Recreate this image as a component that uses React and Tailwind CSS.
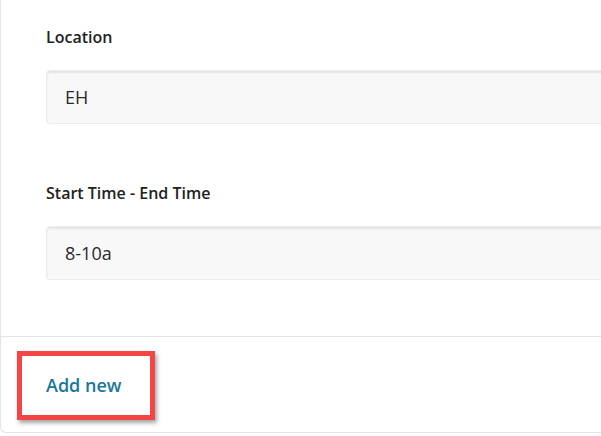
import React from 'react';

const Field = ({ label, value, className = '' }) => (
  <div className={className}>
    <label className="block text-[16px] leading-[22px] font-semibold text-[#222]">{label}</label>
    <div className="mt-[22px] h-[54px] rounded-l-[4px] border border-[#ececec] bg-[#f8f8f8] shadow-[inset_0_2px_2px_rgba(0,0,0,0.08)] flex items-center pl-[18px]">
      <span className="text-[18px] text-[#2a2a2a]">{value}</span>
    </div>
  </div>
);

export default function App() {
  return (
    <div className="w-[601px] h-[436px] overflow-hidden bg-white font-['Open_Sans',sans-serif]">
      <div className="w-[660px] border-l border-b border-[#e4e4e4] rounded-bl-[6px]">
        <div className="pl-[45px] pt-[26px] pb-[56px]">
          <Field label="Location" value="EH" />
          <Field label="Start Time - End Time" value="8-10a" className="mt-[58px]" />
        </div>
        <div className="border-t border-[#e4e4e4] h-[96px] pl-[45px] flex items-center">
          <div className="relative">
            <span className="block text-[18px] leading-[24px] font-semibold text-[#17789b]">Add new</span>
            <div className="absolute left-[-29px] top-[-22px] w-[138px] h-[69px] border-[5px] border-[#f44444] shadow-[2px_3px_4px_rgba(0,0,0,0.35)]" />
          </div>
        </div>
      </div>
    </div>
  );
}
